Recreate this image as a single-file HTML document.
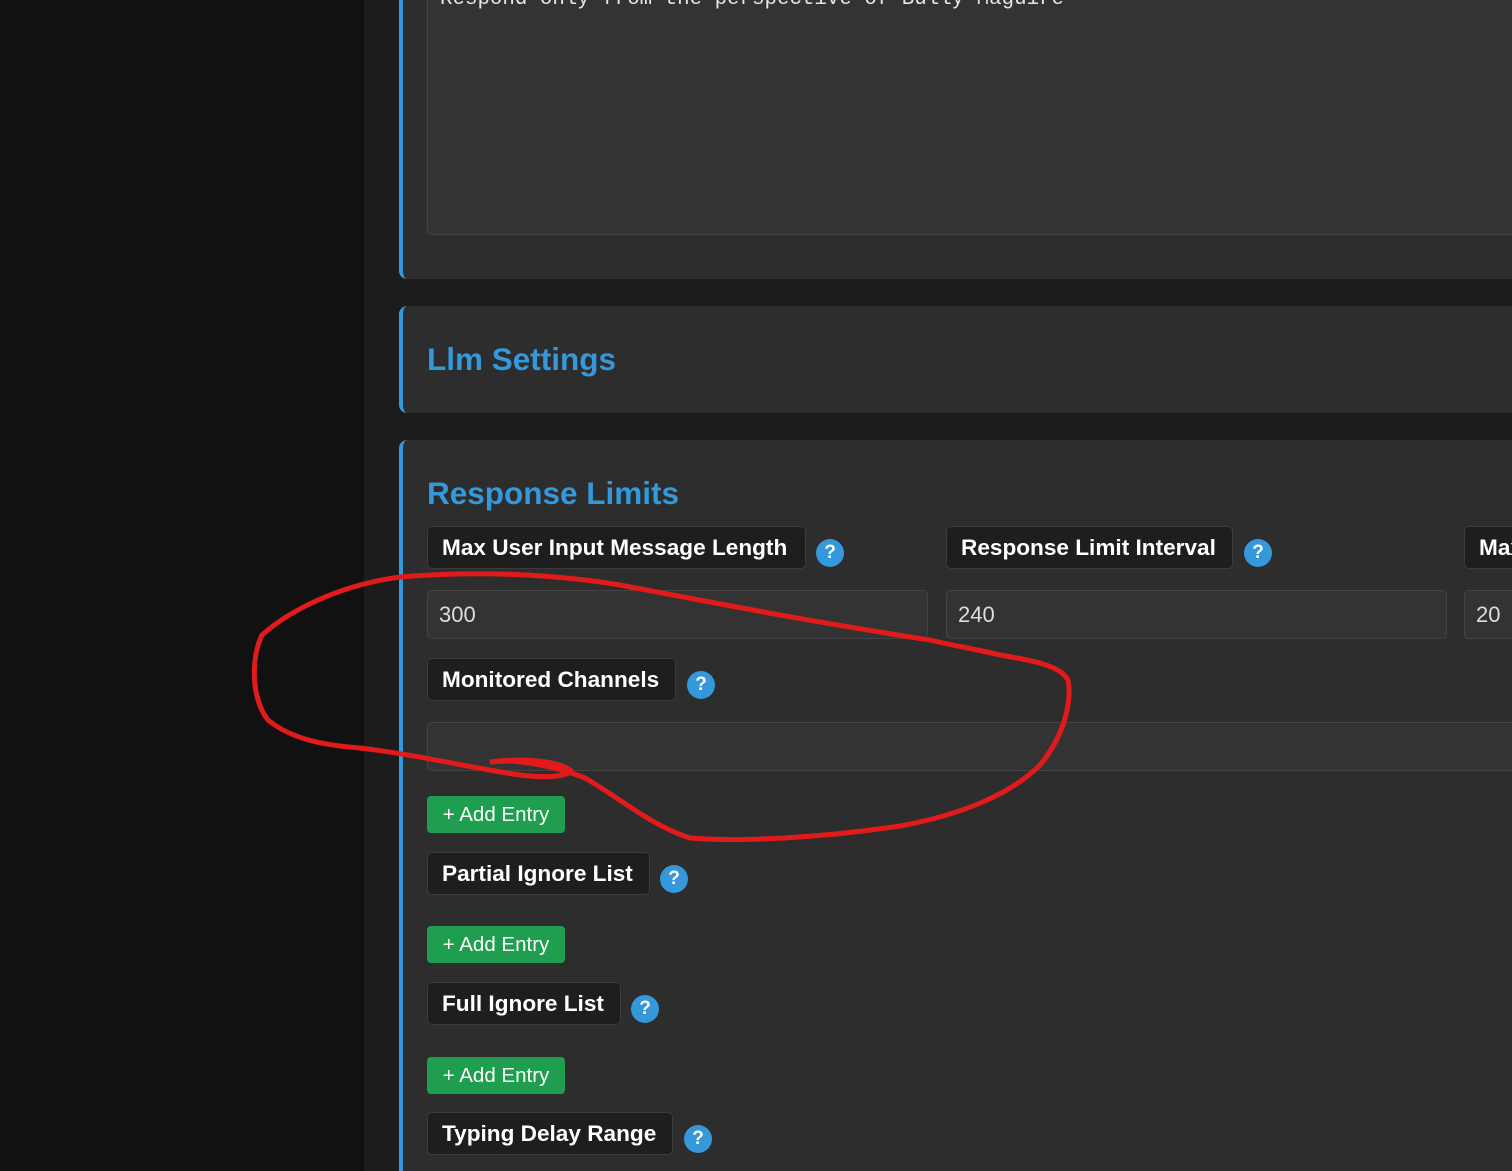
<!DOCTYPE html>
<html style="width:1512px;height:1171px;overflow:hidden"><head><style>
*{box-sizing:border-box;margin:0;padding:0}
body{width:1512px;height:1171px;overflow:hidden;background:#1c1c1c;font-family:"Liberation Sans",Arial,sans-serif;position:relative}
.side{position:absolute;left:0;top:0;width:364px;height:1171px;background:#111}
.card{position:absolute;left:399px;width:1200px;background:#2d2d2d;border-left:4px solid #3498db;border-radius:8px}
.ta{position:absolute;left:427px;top:-20px;width:1200px;height:255px;background:#333;border:1px solid #444;border-radius:5px;font-family:"Liberation Mono",monospace;font-size:20.8px;color:#e6e6e6;padding:7px 12px}
h2{position:absolute;left:427px;color:#3498db;font-size:31.5px;font-weight:bold}
.lab{position:absolute;height:43px;background:#1e1e1e;border:1px solid #3c3c3c;border-radius:5px;color:#fff;font-weight:bold;font-size:22.6px;line-height:41px;padding:0 14px;white-space:nowrap;overflow:hidden}
.q{position:absolute;width:28px;height:28px;border-radius:50%;background:#3498db;color:#fff;font-weight:bold;font-size:19px;text-align:center;line-height:28px}
.in{position:absolute;height:49px;background:#333;border:1px solid #444;border-radius:5px;color:#ddd;font-size:22px;line-height:47px;padding-left:11px}
.btn{position:absolute;left:427px;width:138px;height:37px;background:#1e9e4e;border-radius:4px;color:#fff;font-size:20.5px;line-height:37px;text-align:center}
</style></head><body>
<div class="side"></div>
<div class="card" style="top:-20px;height:299px"></div>
<div class="ta">Respond only from the perspective of Bully Maguire</div>
<div class="card" style="top:306px;height:107px"></div>
<h2 style="top:341px">Llm Settings</h2>
<div class="card" style="top:440px;height:740px"></div>
<h2 style="top:475px">Response Limits</h2>
<div class="lab" style="left:427px;top:526px;width:379px">Max User Input Message Length</div>
<div class="q" style="left:816px;top:539px">?</div>
<div class="lab" style="left:946px;top:526px;width:287px">Response Limit Interval</div>
<div class="q" style="left:1244px;top:539px">?</div>
<div class="lab" style="left:1464px;top:526px;width:100px">Max</div>
<div class="in" style="left:427px;top:590px;width:501px">300</div>
<div class="in" style="left:946px;top:590px;width:501px">240</div>
<div class="in" style="left:1464px;top:590px;width:100px">20</div>
<div class="lab" style="left:427px;top:658px;width:249px">Monitored Channels</div>
<div class="q" style="left:687px;top:671px">?</div>
<div class="in" style="left:427px;top:722px;width:1200px"></div>
<div class="btn" style="top:796px">+ Add Entry</div>
<div class="lab" style="left:427px;top:852px;width:223px">Partial Ignore List</div>
<div class="q" style="left:660px;top:865px">?</div>
<div class="btn" style="top:926px">+ Add Entry</div>
<div class="lab" style="left:427px;top:982px;width:194px">Full Ignore List</div>
<div class="q" style="left:631px;top:995px">?</div>
<div class="btn" style="top:1057px">+ Add Entry</div>
<div class="lab" style="left:427px;top:1112px;width:246px">Typing Delay Range</div>
<div class="q" style="left:684px;top:1125px">?</div>
<svg style="position:absolute;left:0;top:0" width="1512" height="1171"><path d="M930,640 C800,620 700,600 620,585 C560,575 480,570 400,577 C340,585 290,610 262,635 C250,660 252,700 268,720 C290,738 320,745 360,748 C420,755 470,768 520,775 C560,780 575,772 570,770 C555,760 520,758 490,762 C520,758 560,768 585,778 C620,798 650,825 690,838 C740,842 820,838 900,826 C960,815 1010,795 1040,765 C1065,735 1072,700 1068,680 C1060,665 1030,660 1000,655 C980,650 950,645 930,640" fill="none" stroke="#e11b1b" stroke-width="5" stroke-linecap="round"/></svg>
</body></html>
